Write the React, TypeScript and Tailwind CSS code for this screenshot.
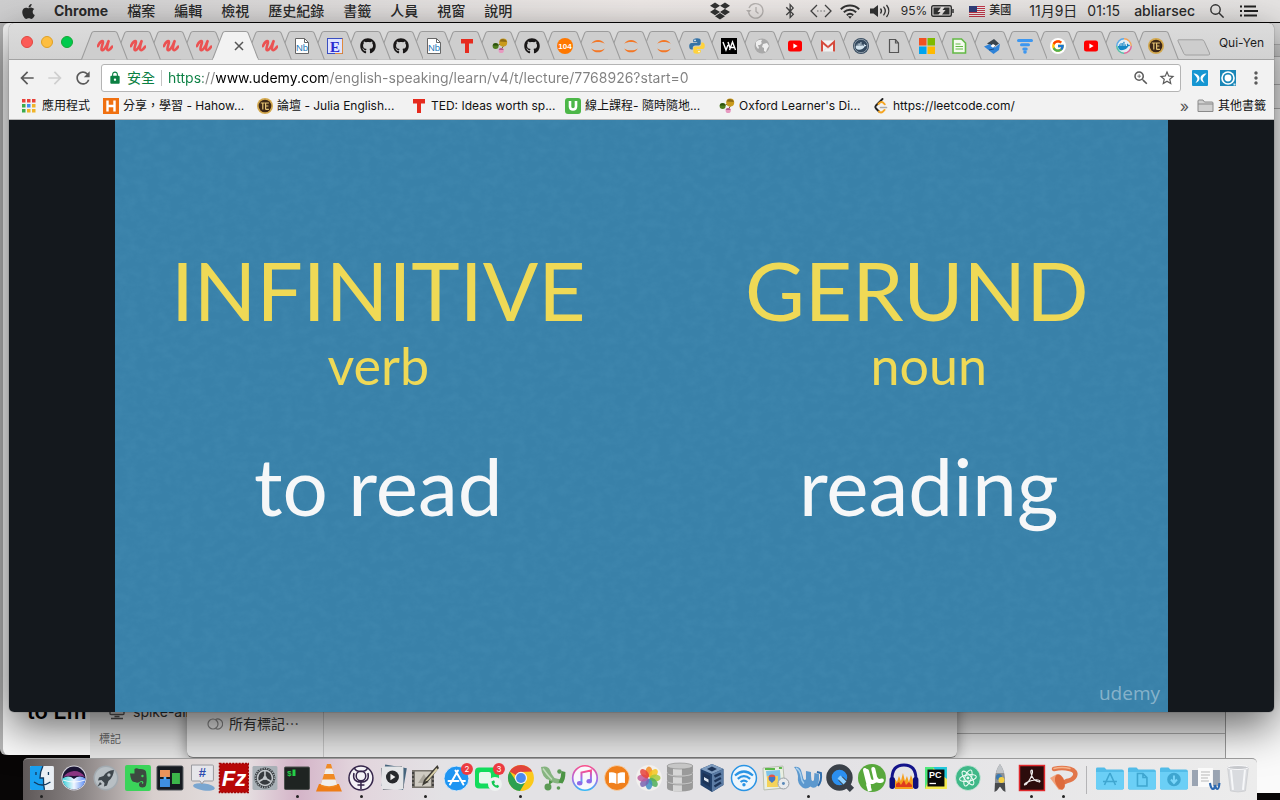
import React from "react";
import { FaGithub, FaApple, FaBluetoothB, FaDocker, FaDropbox } from "react-icons/fa";
import { FcGoogle } from "react-icons/fc";
import {
  MdArrowBack,
  MdArrowForward,
  MdLock,
  MdMoreVert,
  MdRefresh,
  MdStarBorder,
  MdZoomIn,
} from "react-icons/md";

/* ---------- favicons (16 x 16) ---------- */

type Kids = { children: React.ReactNode };

const Fav = ({ children }: Kids) => (
  <svg viewBox="0 0 16 16" className="size-4 shrink-0" aria-hidden="true">
    {children}
  </svg>
);

const UdemyFav = () => (
  <Fav>
    <path
      d="M.8 8.200C2.600 4.400 4.600 2.600 5.800 3.200 7 4.200 3.600 9.600 4.600 11.800 5.800 13.800 9.600 9 11.400 3.400M11.600 3.200C10.400 7 9.400 11 10.600 12 11.800 12.800 13.600 10.800 15.200 8.600"
      fill="none"
      stroke="#eb5252"
      strokeWidth="2.600"
      strokeLinecap="round"
    />
  </Fav>
);

const NbFav = () => (
  <Fav>
    <path d="M1.500.5h9l4 4v11h-13z" fill="#fff" stroke="#666" />
    <path d="M10.500.5v4h4" fill="none" stroke="#666" />
    <text x="2" y="12.500" fontSize="9.500" fontFamily="Liberation Sans Narrow, Liberation Sans" fill="#2a7ab8">
      Nb
    </text>
  </Fav>
);

const EFav = () => (
  <Fav>
    <rect x=".5" y=".5" width="15" height="15" fill="#dfe3ff" stroke="#3a4fc0" />
    <path d="M15.500.5v15H8" fill="none" stroke="#e08a3c" />
    <text x="3" y="13.500" fontSize="15" fontWeight="700" fontFamily="Liberation Serif" fill="#2b2bd0">
      E
    </text>
  </Fav>
);

const GithubFav = () => <FaGithub className="size-4 shrink-0 text-[#191717]" />;

const TedFav = () => (
  <Fav>
    <path d="M2 1h12v4.400h-4V15H6V5.400H2z" fill="#e62b1e" />
  </Fav>
);

const OxfordFav = () => (
  <Fav>
    <path d="M4 8 11 5M9 12l3-5" stroke="#7a6a2a" strokeWidth="1" />
    <circle cx="11.200" cy="4.600" r="4" fill="#c99a1c" />
    <path d="M7.500 3.500A4 4 0 0 1 15 4z" fill="#8c6a14" />
    <circle cx="3.600" cy="8" r="3" fill="#4f7d1e" />
    <path d="M.7 7.500a3 3 0 0 1 5.800 0z" fill="#2c5010" />
    <circle cx="9.200" cy="12.400" r="2.600" fill="#e79ac0" />
    <path d="M6.700 12a2.600 2.600 0 0 1 5 0z" fill="#b05a8a" />
  </Fav>
);

const JobFav = () => (
  <Fav>
    <circle cx="8" cy="8" r="8" fill="#ff7800" />
    <text x="8" y="11" textAnchor="middle" fontSize="8" fontWeight="700" fontFamily="Liberation Sans" fill="#fff">
      104
    </text>
  </Fav>
);

const JupyterFav = () => (
  <Fav>
    <path d="M1.200 6C4 .8 12 .8 14.800 6 11.800 3.400 4.200 3.400 1.200 6z" fill="#f37726" />
    <path d="M1.200 10.400c2.800 5.200 10.800 5.200 13.600 0-3 2.600-10.600 2.600-13.600 0z" fill="#f37726" />
  </Fav>
);

const PythonFav = () => (
  <Fav>
    <path
      d="M8 .3c-3 0-3.800 1-3.800 2.200v1.700h4v.7H2.500C1 4.900.2 6.200.2 8.200s.9 3.300 2.200 3.300h1.400V9.600c0-1.200 1-2.200 2.300-2.200h3.700c1.100 0 1.900-.9 1.900-1.900v-3C11.700 1 10.500.3 8 .3z"
      fill="#3572a5"
    />
    <path
      d="M8 15.700c3 0 3.800-1 3.800-2.200v-1.700h-4v-.7h5.700c1.500 0 2.300-1.300 2.300-3.300s-.9-3.300-2.200-3.300h-1.400v1.900c0 1.200-1 2.200-2.300 2.200H6.200c-1.100 0-1.900.9-1.900 1.900v3c0 1.500 1.200 2.200 3.700 2.200z"
      fill="#ffd23c"
    />
    <circle cx="6" cy="2.400" r=".8" fill="#fff" />
    <circle cx="10" cy="13.600" r=".8" fill="#fff" />
  </Fav>
);

const VaFav = () => (
  <Fav>
    <rect width="16" height="16" fill="#000" />
    <path d="M2 4l3 8 2-5M7 4l2 6M8.500 12l3-8 3 8M10 9.500h4" fill="none" stroke="#fff" strokeWidth="1.400" />
  </Fav>
);

const GlobeFav = () => (
  <Fav>
    <circle cx="8" cy="8" r="7.500" fill="#a9a9a9" />
    <path d="M2 4c2-2 4-2.500 6-2l-1 2 1 1-2 2H4l1 3-1 1-2-3zM9 6l4-1 2 3-2 3-1 3-2-1v-3L8 9z" fill="#eee" />
  </Fav>
);

const YoutubeFav = () => (
  <Fav>
    <rect x="1" y="2.500" width="14" height="11" rx="2.500" fill="#f00" />
    <path d="M6.400 5.500v5L10.600 8z" fill="#fff" />
  </Fav>
);

const GmailFav = () => (
  <Fav>
    <rect x="1" y="2.500" width="14" height="11" rx="1" fill="#f2f2f2" />
    <path d="M2 13.500V4l6 5.200L14 4v9.500" fill="none" stroke="#d54b3d" strokeWidth="2" />
    <path d="M3 13.400l4.500-4.500M13 13.400L8.500 8.900" stroke="#d8d8d8" strokeWidth=".6" />
  </Fav>
);

const DockerFav = () => (
  <Fav>
    <circle cx="8" cy="8" r="8" fill="#34495e" />
    <circle cx="8" cy="8" r="6.700" fill="none" stroke="#c4ccd4" strokeWidth=".6" />
    <svg x="2.500" y="2.500" width="11" height="11" viewBox="0 0 640 512">
      <FaDocker style={{ width: 640, height: 512, color: "#d4e4ee" }} />
    </svg>
  </Fav>
);

const DockerRingFav = () => (
  <Fav>
    <circle cx="8" cy="8" r="7" fill="#e4edf2" />
    <g fill="none" strokeWidth="1.500">
      <path d="M8 .8a7.200 7.200 0 0 1 7.200 7.200" stroke="#f2a45c" />
      <path d="M15.200 8A7.200 7.200 0 0 1 8 15.200" stroke="#e06a9a" />
      <path d="M8 15.200A7.200 7.200 0 0 1 .8 8" stroke="#58c0a8" />
      <path d="M.8 8A7.200 7.200 0 0 1 8 .8" stroke="#5aa8e8" />
    </g>
    <svg x="2" y="2.500" width="12" height="11" viewBox="0 0 640 512">
      <FaDocker style={{ width: 640, height: 512, color: "#1488c6" }} />
    </svg>
  </Fav>
);

const PageFav = () => (
  <Fav>
    <path d="M3.500 1.500h6l3 3.500v9.500h-9zM9.500 1.500V5h3" fill="none" stroke="#555" strokeWidth="1.200" />
  </Fav>
);

const MicrosoftFav = () => (
  <Fav>
    <path d="M0 0h7.500v7.500H0z" fill="#f25022" />
    <path d="M8.500 0H16v7.500H8.500z" fill="#7fba00" />
    <path d="M0 8.500h7.500V16H0z" fill="#00a4ef" />
    <path d="M8.500 8.500H16V16H8.500z" fill="#ffb900" />
  </Fav>
);

const SheetFav = () => (
  <Fav>
    <path d="M2 1h8.500L14.500 5v10H2z" fill="#f4fbef" stroke="#63b946" strokeWidth="1.600" />
    <path d="M4.500 6h5M4.500 8.500h7.500M4.500 11h7.500" stroke="#63b946" strokeWidth="1.200" />
  </Fav>
);

const PlaneFav = () => (
  <Fav>
    <path d="M3 5.500L10 1l5 4.500-5 3.500z" fill="#39444c" />
    <path d="M0 8.500l6-2.500 5 3.500 5-4-1 6.500-5.500 4z" fill="#2f83d8" />
    <path d="M6.500 8L9 6l2.500 1.500L9 9.800z" fill="#fff" />
    <path d="M5 12l5-1" stroke="#1c4f86" />
  </Fav>
);

const FunnelFav = () => (
  <Fav>
    <path
      d="M1.500 2.500h13M4.500 6.800h7M6.800 11h2.400"
      stroke="#3d97f0"
      strokeWidth="3"
      strokeLinecap="round"
    />
    <circle cx="8" cy="14" r="1.800" fill="#3d97f0" />
  </Fav>
);

const GoogleFav = () => (
  <span className="flex size-4 shrink-0 items-center justify-center rounded-full bg-white">
    <FcGoogle className="size-3.5" />
  </span>
);

const JuliaFav = () => (
  <Fav>
    <circle cx="8" cy="8" r="8" fill="#d3a84e" />
    <circle cx="8" cy="8" r="6.300" fill="#3d2817" />
    <path
      d="M3.800 5h4M5.800 5v6.500M8.600 4.500v7M8.600 5h3.300M8.600 8h2.800M8.600 11.300h3.300"
      stroke="#e4c274"
      strokeWidth="1.200"
      fill="none"
    />
  </Fav>
);

const tabs: { title: string; icon: React.ReactNode }[] = [
  { title: "Udemy", icon: <UdemyFav /> },
  { title: "Udemy", icon: <UdemyFav /> },
  { title: "Udemy", icon: <UdemyFav /> },
  { title: "Udemy", icon: <UdemyFav /> },
  { title: "Udemy lecture", icon: null },
  { title: "Udemy", icon: <UdemyFav /> },
  { title: "Notebook", icon: <NbFav /> },
  { title: "Encyclopedia", icon: <EFav /> },
  { title: "GitHub", icon: <GithubFav /> },
  { title: "GitHub", icon: <GithubFav /> },
  { title: "Notebook", icon: <NbFav /> },
  { title: "TED", icon: <TedFav /> },
  { title: "Oxford", icon: <OxfordFav /> },
  { title: "GitHub", icon: <GithubFav /> },
  { title: "Job bank", icon: <JobFav /> },
  { title: "Jupyter", icon: <JupyterFav /> },
  { title: "Jupyter", icon: <JupyterFav /> },
  { title: "Jupyter", icon: <JupyterFav /> },
  { title: "Python", icon: <PythonFav /> },
  { title: "Visual", icon: <VaFav /> },
  { title: "Globe", icon: <GlobeFav /> },
  { title: "YouTube", icon: <YoutubeFav /> },
  { title: "Gmail", icon: <GmailFav /> },
  { title: "Docker", icon: <DockerFav /> },
  { title: "Page", icon: <PageFav /> },
  { title: "Microsoft", icon: <MicrosoftFav /> },
  { title: "Document", icon: <SheetFav /> },
  { title: "Plane", icon: <PlaneFav /> },
  { title: "Filter", icon: <FunnelFav /> },
  { title: "Google", icon: <GoogleFav /> },
  { title: "YouTube", icon: <YoutubeFav /> },
  { title: "Docker", icon: <DockerRingFav /> },
  { title: "Julia English", icon: <JuliaFav /> },
];

const ACTIVE = 4;

/* ---------- macOS menu bar ---------- */

const menus = ["檔案", "編輯", "檢視", "歷史紀錄", "書籤", "人員", "視窗", "說明"];

function MenuBar() {
  return (
    <header className="flex h-[22px] items-center justify-between bg-linear-to-r from-[#cfcfd0] via-[#efeae8] to-[#e6e4e3] pr-[22px] pl-5 text-sm text-[#2b2b2b]">
      <nav className="flex items-center gap-[19px] whitespace-nowrap">
        <button aria-label="Apple" className="w-[15px]">
          <FaApple className="size-[17px] text-[#2d2d2d]" />
        </button>
        <button className="font-bold">Chrome</button>
        {menus.map((m) => (
          <button key={m} className="font-medium">
            {m}
          </button>
        ))}
      </nav>
      <div className="flex items-center whitespace-nowrap">
        <FaDropbox className="mr-4 size-5 text-[#333]" />
        <svg viewBox="0 0 18 18" className="mr-5 size-[18px]" fill="none" stroke="#b8b4b2" strokeWidth="1.300">
          <path d="M3 6a7.300 7.300 0 1 1-.4 4.500" />
          <path d="M10 5v4.500l2.500 2" />
          <path d="M0 8h5.500L2.800 11z" fill="#b8b4b2" stroke="none" />
        </svg>
        <FaBluetoothB className="mr-3.5 h-4 w-3 text-[#444]" />
        <svg viewBox="0 0 22 16" className="mr-2 h-4 w-[22px]" fill="none" stroke="#444" strokeWidth="1.300">
          <path d="M7 2L1 8l6 6M15 2l6 6-6 6" />
          <path d="M7 8h1.500M10.300 8h1.500M13.600 8h1.500" stroke="#999" strokeWidth="1.500" />
        </svg>
        <svg viewBox="0 0 20 15" className="mr-2.5 h-[15px] w-5" fill="none" stroke="#333" strokeWidth="1.900">
          <path d="M.8 5.200c5.200-5 13.200-5 18.400 0M3.800 8.200c3.600-3.300 8.800-3.300 12.400 0M6.800 11.200c2-1.700 4.400-1.700 6.400 0" />
          <path d="M8 12.300h4l-2 2.500z" fill="#333" stroke="none" />
        </svg>
        <svg viewBox="0 0 21 16" className="mr-2.5 h-4 w-[21px]" fill="none" stroke="#333" strokeWidth="1.300">
          <path d="M0 5.500h3.500L8 2v12l-4.500-3.500H0z" fill="#333" stroke="none" />
          <path d="M10.500 5.500c1.200 1.500 1.200 3.500 0 5M13.500 3.700c2.200 2.600 2.200 6 0 8.600M16.500 2c3 3.600 3 8.400 0 12" />
        </svg>
        <span className="mr-1 text-xs">95%</span>
        <svg viewBox="0 0 24 12" className="mr-3.5 h-3 w-6" fill="none">
          <rect x=".7" y=".7" width="19.600" height="10.600" rx="1.500" stroke="#333" strokeWidth="1.400" />
          <path d="M2.500 2.500h7.500L6.500 7h3L7.500 9.500h-5zM18.500 9.500H11L14.500 5h-3L13.500 2.500h5z" fill="#333" />
          <path d="M22 4v4" stroke="#333" strokeWidth="1.500" />
        </svg>
        <svg viewBox="0 0 16 11" className="mr-1 h-[11px] w-4">
          <rect width="16" height="11" fill="#f3eded" />
          <path d="M0 .5h16M0 2.500h16M0 4.500h16M0 6.500h16M0 8.500h16M0 10.500h16" stroke="#c2384a" />
          <rect width="8" height="6" fill="#313f7c" />
        </svg>
        <span className="mr-[18px] text-[11px] font-medium">美國</span>
        <span className="mr-2.5">11月9日</span>
        <span className="mr-3.5">01:15</span>
        <span className="mr-[15px] font-medium">abliarsec</span>
        <svg viewBox="0 0 14 14" className="mr-4 size-3.5" fill="none" stroke="#333" strokeWidth="1.400">
          <circle cx="5.500" cy="5.500" r="4.700" />
          <path d="M9 9l4.600 4.600" />
        </svg>
        <svg viewBox="0 0 18 12" className="h-3 w-[18px]" stroke="#222" strokeWidth="1.800">
          <path d="M0 1.500h2M4 1.500h12M0 6h2M4 6h14M0 10.500h2M4 10.500h13" />
        </svg>
      </div>
    </header>
  );
}

/* ---------- Chrome ---------- */

function TabStrip() {
  return (
    <div className="flex h-[37px] items-start rounded-t-md border-b border-[#a3a3a3] bg-linear-to-b from-[#dcdcdc] to-[#d2d2d2] pl-3">
      <div className="flex w-[60px] shrink-0 gap-2 pt-[13px]">
        <button aria-label="Close" className="size-3 rounded-full border border-[#e2463f] bg-[#fc5b57]" />
        <button aria-label="Minimize" className="size-3 rounded-full border border-[#dfa023] bg-[#fdbe41]" />
        <button aria-label="Zoom" className="size-3 rounded-full border border-[#14a834] bg-[#00ca4e]" />
      </div>
      <div role="tablist" className="mt-2 flex h-[29px] min-w-0 flex-1">
        {tabs.map((tab, i) => {
          const active = i === ACTIVE;
          return (
            <button
              key={i}
              role="tab"
              aria-selected={active}
              aria-label={tab.title}
              className="relative h-full min-w-0 flex-1"
              style={{ zIndex: active ? 60 : 50 - i }}
            >
              <svg
                viewBox="0 0 46 29"
                preserveAspectRatio="none"
                className="absolute top-0 left-0 h-full w-[calc(100%+14px)]"
                aria-hidden="true"
              >
                <path
                  d="M.5 28.500L10.500 2Q11.200.5 13 .5H33Q34.800.5 35.500 2L45.500 28.500"
                  fill={active ? "#f2f2f2" : "#cecece"}
                  stroke="#9c9c9c"
                />
                {active && <path d="M1 28.500h44" stroke="#f2f2f2" strokeWidth="2" />}
              </svg>
              <span className="absolute inset-y-0 left-0 flex w-[calc(100%+16px)] items-center justify-center">
                {active ? (
                  <svg viewBox="0 0 10 10" className="ml-1 size-2.5" stroke="#555" strokeWidth="1.500">
                    <path d="M1 1l8 8M9 1L1 9" />
                  </svg>
                ) : (
                  tab.icon
                )}
              </span>
            </button>
          );
        })}
      </div>
      <button aria-label="New tab" className="mt-4 ml-3 shrink-0">
        <svg viewBox="0 0 34 17" className="h-[17px] w-[34px]">
          <path
            d="M1.500.8H25q1.500 0 2.200 1.500L32.500 14q.8 2-1.200 2H9q-1.600 0-2.200-1.500L1 2Q.6.8 1.500.8z"
            fill="#cdcdcd"
            stroke="#a0a0a0"
          />
        </svg>
      </button>
      <button className="mt-[11px] mr-2.5 ml-2 shrink-0 text-xs leading-[18px] text-[#1c1c1c]">Qui-Yen</button>
    </div>
  );
}

function Toolbar() {
  return (
    <div className="flex h-8 items-center bg-[#f2f2f2] pt-1 pr-2 pl-2">
      <button aria-label="Back" className="mr-2">
        <MdArrowBack className="size-5 text-[#5a5a5a]" />
      </button>
      <button aria-label="Forward" className="mr-2">
        <MdArrowForward className="size-5 text-[#cfcfcf]" />
      </button>
      <button aria-label="Reload" className="mr-2">
        <MdRefresh className="size-5 text-[#5a5a5a]" />
      </button>
      <div className="flex h-7 min-w-0 flex-1 items-center rounded-[3px] border border-[#b4b4b4] bg-white pr-1 pl-1.5 text-sm">
        <MdLock className="size-3.5 shrink-0 text-[#0b8043]" />
        <span className="ml-[5px] shrink-0 text-[#0b8043]">安全</span>
        <span className="mx-1.5 h-4 w-px shrink-0 bg-[#c4c4c4]" />
        <input
          aria-label="Address"
          type="text"
          defaultValue="https://www.udemy.com/english-speaking/learn/v4/t/lecture/7768926?start=0"
          className="min-w-0 flex-1 bg-[linear-gradient(to_right,#0b8043_0px,#0b8043_35px,#808080_35px,#808080_48px,#000_48px,#000_159px,#808080_159px)] bg-clip-text text-transparent outline-none"
        />
        <button aria-label="Zoom level">
          <MdZoomIn className="size-[18px] text-[#5a5a5a]" />
        </button>
        <button aria-label="Bookmark this page" className="ml-2">
          <MdStarBorder className="size-[18px] text-[#5a5a5a]" />
        </button>
      </div>
      <button aria-label="Butterfly extension" className="ml-[11px]">
        <Fav>
          <rect width="16" height="16" rx="1" fill="#1696d2" />
          <path d="M1.500 3.500c3 0 6 1.500 6 5 0 2-2 4-4 4.500 1-1.500 1.500-2.500 2-4-1-2.500-2.500-4-4-5.500zM14.500 3.500c-3 0-6 1.500-6 5 0 2 2 4 4 4.500-1-1.500-1.500-2.500-2-4 1-2.500 2.500-4 4-5.500z" fill="#fff" />
        </Fav>
      </button>
      <button aria-label="Circle extension" className="ml-3">
        <Fav>
          <rect width="16" height="16" fill="#1a87b8" />
          <circle cx="8" cy="8" r="6.800" fill="#fff" />
          <circle cx="8" cy="8" r="4.300" fill="none" stroke="#1a87b8" strokeWidth="1.800" />
          <path d="M13.500 13.500h2v2h-2z" fill="#cfe6f2" />
        </Fav>
      </button>
      <button aria-label="Menu" className="ml-2.5">
        <MdMoreVert className="size-5 text-[#5a5a5a]" />
      </button>
    </div>
  );
}

const bookmarks: { label: string; icon: React.ReactNode }[] = [
  {
    label: "分享，學習 - Hahow...",
    icon: (
      <Fav>
        <rect width="16" height="16" fill="#f07010" />
        <path d="M4.500 2.500v11M11.500 2.500v11M4.500 8h7" stroke="#fff" strokeWidth="2.400" />
      </Fav>
    ),
  },
  { label: "論壇 - Julia English...", icon: <JuliaFav /> },
  { label: "TED: Ideas worth sp...", icon: <TedFav /> },
  {
    label: "線上課程- 隨時隨地...",
    icon: (
      <Fav>
        <rect width="16" height="16" rx="3" fill="#4cb748" />
        <path d="M5 3v5.500q0 3 3 3t3-3V3" fill="none" stroke="#fff" strokeWidth="2.600" />
      </Fav>
    ),
  },
  { label: "Oxford Learner's Di...", icon: <OxfordFav /> },
  {
    label: "https://leetcode.com/",
    icon: (
      <Fav>
        <path d="M9.500 1L3 7.500q-1.300 1.500 0 3l3 3" fill="none" stroke="#222" strokeWidth="1.900" strokeLinecap="round" />
        <path d="M6 13.500q2 1.800 4 0l1.600-1.600M5.500 6l1.500-1.500q1.500-1 3 0l1.800 1.800" fill="none" stroke="#f5a623" strokeWidth="1.900" strokeLinecap="round" />
        <path d="M7.500 9.500h6" stroke="#aaa" strokeWidth="1.700" strokeLinecap="round" />
      </Fav>
    ),
  },
];

const appDots = ["#e8413a", "#e8413a", "#e8413a", "#3bab4d", "#3f8df5", "#f0b429", "#3bab4d", "#f0b429", "#f0b429"];

function BookmarksBar() {
  return (
    <nav className="flex h-7 items-center border-b border-[#b9b9b9] bg-[#f2f2f2] pr-2 pl-[13px] text-xs whitespace-nowrap text-[#111]">
      <a href="#apps" className="flex w-[81px] shrink-0 items-center gap-1">
        <svg viewBox="0 0 16 16" className="size-4 shrink-0" aria-hidden="true">
          {appDots.map((c, i) => (
            <rect key={i} x={(i % 3) * 5} y={1 + Math.floor(i / 3) * 5} width="3.500" height="3.500" fill={c} />
          ))}
        </svg>
        應用程式
      </a>
      {bookmarks.map((b) => (
        <a key={b.label} href="#bookmark" className="flex w-[154px] items-center gap-1">
          {b.icon}
          {b.label}
        </a>
      ))}
      <button aria-label="More bookmarks" className="ml-auto text-base leading-4 text-[#555]">
        »
      </button>
      <button className="ml-2 flex items-center gap-1">
        <svg viewBox="0 0 17 14" className="h-3.5 w-[17px]">
          <path d="M1 12.500V2q0-1 1-1h4l1.500 2H15q1 0 1 1v8.500z" fill="#d0d0d0" stroke="#8a8a8a" />
          <path d="M1 5h15" stroke="#8a8a8a" />
        </svg>
        其他書籤
      </button>
    </nav>
  );
}

function Slide() {
  return (
    <main className="flex flex-1 rounded-b-[5px] bg-[#14181d] px-[106px]">
      <section className="relative flex-1 overflow-hidden bg-[#3981a9]">
        <svg className="absolute inset-0 size-full opacity-15" aria-hidden="true">
          <filter id="paper">
            <feTurbulence type="fractalNoise" baseFrequency="0.09 0.12" numOctaves="5" seed="4" />
            <feColorMatrix values="0 0 0 0 .1  0 0 0 0 .35  0 0 0 0 .55  2 0 0 0 -.7" />
          </filter>
          <rect width="100%" height="100%" filter="url(#paper)" />
        </svg>
        <div className="relative grid grid-cols-2 pt-[127px] text-center font-['Lato',sans-serif] whitespace-nowrap">
          <div>
            <h1 className="text-[82px] leading-[84px] text-[#efd956]">INFINITIVE</h1>
            <p className="mt-1 text-[52px] leading-[60px] text-[#efd956]">verb</p>
            <p className="mt-12 text-[80px] leading-[84px] text-[#f6f7f8]">to read</p>
          </div>
          <div className="pl-12">
            <h1 className="pr-6 text-[82px] leading-[84px] text-[#efd956]">GERUND</h1>
            <p className="mt-1 text-[52px] leading-[60px] text-[#efd956]">noun</p>
            <p className="mt-12 text-[80px] leading-[84px] text-[#f6f7f8]">reading</p>
          </div>
        </div>
        <span className="absolute right-2 bottom-1 font-['Open_Sans',sans-serif] text-[19px] leading-[30px] text-white/40">
          udemy
        </span>
      </section>
    </main>
  );
}

function ChromeWindow() {
  return (
    <div className="relative mt-px mr-[6px] mb-[88px] ml-[9px] flex flex-1 flex-col rounded-t-md rounded-b-[5px] shadow-[0_0_1px_rgba(0,0,0,0.8),0_14px_44px_rgba(0,0,0,0.62)]">
      <TabStrip />
      <Toolbar />
      <BookmarksBar />
      <Slide />
    </div>
  );
}

/* ---------- windows behind Chrome ---------- */

function BackgroundWindows() {
  return (
    <div aria-hidden="true" className="absolute inset-x-0 top-[23px] bottom-0 overflow-hidden text-[#333]">
      <div className="absolute top-0 bottom-[45px] left-0 w-40 rounded-bl-md bg-[#b5b5b5]" />
      <div className="absolute top-0 bottom-[45px] left-[3px] w-96 rounded-l-md bg-[#fafafa]">
        <span className="absolute bottom-[30px] left-6 text-[22px] leading-7 font-semibold text-black">to Em</span>
      </div>
      <div className="absolute top-0 right-0 bottom-[7px] w-80 bg-[#fafafa]">
        <div className="h-[22px] border-b border-[#b0b0b0] bg-[#dcdcdc]" />
        <div className="h-3 border-b border-[#b0b0b0] bg-[#cfcfcf]" />
        <div className="h-7 border-b border-[#b0b0b0] bg-[#ececec]" />
        <div className="h-6 border-b border-[#b0b0b0] bg-[#ececec]" />
      </div>
      <div className="absolute bottom-0 left-[90px] h-40 w-[900px] bg-[#e6e6e6]">
        <div className="absolute bottom-[78px] left-[19px] flex items-center gap-2 text-sm leading-5">
          <svg viewBox="0 0 16 16" className="size-4" fill="none" stroke="#555" strokeWidth="1.400">
            <rect x="1" y="1" width="14" height="9.500" rx="1" />
            <path d="M2 14.500h12M5.500 12.500h5" />
          </svg>
          spike-airp
        </div>
        <div className="absolute bottom-[53px] left-[9px] text-[11px] leading-4 text-[#666]">標記</div>
        <div className="absolute bottom-6 left-[21px] flex items-center gap-2.5 text-sm leading-5">
          <span className="size-3 rounded-full bg-[#f0363a]" />
          紅色
        </div>
      </div>
      <div className="absolute right-[54px] bottom-0 left-[700px] h-40 border-r border-[#9a9a9a] bg-[#eee]">
        <div className="absolute inset-x-0 bottom-[66px] border-t border-[#aaa]" />
      </div>
      <div className="absolute right-[323px] bottom-[42px] left-[187px] flex h-40 items-end rounded-b-md border-b border-[#777] bg-[#e8e8e8] shadow-[0_0_14px_rgba(0,0,0,0.45)]">
        <div className="flex h-full w-[137px] items-end gap-1.5 border-r border-[#c4c4c4] pb-[23px] pl-5 text-sm leading-5 whitespace-nowrap">
          <svg viewBox="0 0 16 14" className="h-5 w-4 shrink-0" fill="none" stroke="#888" strokeWidth="1.200">
            <circle cx="6" cy="7" r="5" />
            <path d="M8.500 2.500a5 5 0 1 1 0 9" />
          </svg>
          <span>所有標記⋯</span>
        </div>
      </div>
    </div>
  );
}

/* ---------- dock icons (32 x 32) ---------- */

const Badge = ({ n }: { n: number }) => (
  <g>
    <circle cx="26" cy="7" r="6" fill="#ec3b41" />
    <text x="26" y="10" textAnchor="middle" fontSize="8" fontFamily="Inter" fill="#fff">
      {n}
    </text>
  </g>
);

const Folder = ({ children }: Kids) => (
  <g>
    <path d="M2 7q0-1.500 1.500-1.500h7l2 2H28q2 0 2 2V26q0 1.500-1.500 1.500h-25Q2 27.500 2 26z" fill="#52bce8" />
    <path d="M2 10h28v16q0 1.500-1.500 1.500h-25Q2 27.500 2 26z" fill="#6bcff6" />
    <g fill="none" stroke="#3fa6d0" strokeWidth="1.600">
      {children}
    </g>
  </g>
);

const petals = ["#f58a1f", "#f6c61d", "#a6c93a", "#4fae5a", "#3f8fc4", "#7a64b0", "#c05a9a", "#e8443c"];

const dockApps: { name: string; running?: boolean; art: React.ReactNode }[] = [
  {
    name: "Finder",
    running: true,
    art: (
      <>
        <rect x="4" y="4" width="24" height="24" rx="1.500" fill="#e9eef4" />
        <path d="M5.500 4H17q-3 6-3 12h3.500q-.2 6 1 12h-13Q4 28 4 26.500v-21Q4 4 5.500 4z" fill="#18a0f0" />
        <path d="M10 10v3M22.500 10v3M8 20q8 6 16.500 0M17 4q-3 6-3 12h3.500q-.2 6 1 12" fill="none" stroke="#123a60" strokeWidth="1.300" />
      </>
    ),
  },
  {
    name: "Siri",
    art: (
      <>
        <defs>
          <linearGradient id="siri" x1="0" y1="0" x2="1" y2="0">
            <stop offset="0" stopColor="#38d0d8" />
            <stop offset=".5" stopColor="#f0f6ff" />
            <stop offset="1" stopColor="#5a8cf4" />
          </linearGradient>
        </defs>
        <circle cx="16" cy="16" r="12.500" fill="#d8d8e0" />
        <circle cx="16" cy="16" r="11.500" fill="#1a1433" />
        <path d="M5.500 15q3-5 10.500-6 7 0 11 6-6-2-11-1-5-1-10.500 1z" fill="#b0409c" opacity=".75" />
        <path d="M4.500 16.500q6-4 11.500.5 5.500-4.500 11.500-.5a11.500 11.500 0 0 1-5 9q-6.500 4-13 0a11.500 11.500 0 0 1-5-9z" fill="url(#siri)" />
        <path d="M5 18q11 4 22 0" fill="none" stroke="#fff" strokeWidth="1.200" opacity=".8" />
      </>
    ),
  },
  {
    name: "Launchpad",
    art: (
      <>
        <circle cx="16" cy="16" r="12.500" fill="#a2aab0" />
        <circle cx="16" cy="16" r="11" fill="#b8bfc4" />
        <path d="M24 8q-7 .5-10.500 6L9 15.500l-1 3 3.500-.5 3 3-.5 3.500 3-1 1.500-4.500q5-3.500 5.500-11z" fill="#3e464c" />
        <circle cx="19" cy="13" r="1.700" fill="#b8bfc4" />
        <path d="M10 20l-2.500 4.500L12 22z" fill="#3e464c" />
      </>
    ),
  },
  {
    name: "Evernote",
    art: (
      <>
        <rect x="3" y="3" width="26" height="26" rx="2" fill="#3bd45a" />
        <path d="M8 11.500h4.500V7q2-1.500 4.500 0 6-.5 7 2.500 1.500 8 0 14-.6 2-3.500 2-3.500 0-3.500-3t3-2.500v2q1.500 0 1.500-1.500t-2.500-1.500q-3 3-6 1-4 1-5-8.500z" fill="#3c4a40" />
        <circle cx="20.500" cy="14" r="1.200" fill="#3bd45a" />
      </>
    ),
  },
  {
    name: "Layout",
    art: (
      <>
        <rect x="3" y="4" width="26" height="24" rx="1.500" fill="#161a20" stroke="#4a4e54" />
        <path d="M6 8h10v7H6z" fill="#e8935a" />
        <path d="M6 17h10v8H6z" fill="#3f8fe0" />
        <path d="M18 11h8v11h-8z" fill="#3cb54a" />
        <circle cx="11" cy="16" r="1.500" fill="#5ab4ff" />
      </>
    ),
  },
  {
    name: "Chat",
    art: (
      <>
        <ellipse cx="18" cy="25" rx="11" ry="3.500" fill="#7aa6d0" transform="rotate(8 18 25)" />
        <path d="M5.500 3h21q1 0 1 1v14q0 1-1 1H18l-2 3-2-3H6.500q-1 0-1-1z" fill="#e6e6ea" stroke="#9a9a9e" />
        <text x="16.500" y="15" textAnchor="middle" fontSize="13" fontWeight="700" fontFamily="Liberation Sans" fill="#2c4ab0">
          #
        </text>
      </>
    ),
  },
  {
    name: "FileZilla",
    art: (
      <>
        <rect x="1.500" y="1.500" width="29" height="29" fill="#b80808" stroke="#a00505" strokeWidth="1.500" strokeDasharray="2 1.200" />
        <text x="16" y="24" textAnchor="middle" fontSize="22" fontStyle="italic" fontWeight="700" fontFamily="Liberation Sans" fill="#fff">
          Fz
        </text>
      </>
    ),
  },
  {
    name: "System Preferences",
    art: (
      <>
        <rect x="3.500" y="4" width="25" height="24" rx="1.500" fill="#a8b0b6" />
        <circle cx="16" cy="16" r="10.500" fill="#363a3e" />
        <circle cx="16" cy="16" r="7.500" fill="none" stroke="#c2c6ca" strokeWidth="1.600" />
        <circle cx="16" cy="16" r="9.500" fill="none" stroke="#a8b0b6" strokeWidth="1.500" strokeDasharray="1.200 1.200" />
        <path d="M16 16V9M16 16l6 3.500M16 16l-6 3.500" stroke="#c2c6ca" strokeWidth="1.600" />
        <circle cx="16" cy="16" r="2" fill="#c2c6ca" />
      </>
    ),
  },
  {
    name: "Terminal",
    running: true,
    art: (
      <>
        <rect x="3.500" y="5" width="25" height="22.500" rx="1" fill="#1f2422" stroke="#4a4e4c" />
        <text x="6" y="14" fontSize="8" fontWeight="700" fontFamily="Liberation Mono" fill="#25d048">
          $
        </text>
        <path d="M11.500 7.500h3v6.500h-3z" fill="#25d048" />
      </>
    ),
  },
  {
    name: "VLC",
    art: (
      <>
        <path d="M6 22h20l3 7.500H3z" fill="#ee7d16" />
        <path d="M14 2h4l6.500 22q-8.500 3.500-17 0z" fill="#f08a24" />
        <path d="M12.700 6.500h6.600l1.700 5.500H11zM9.400 17.500h13.200l1.600 5q-8 3.500-16.400 0z" fill="#f0efed" />
      </>
    ),
  },
  {
    name: "GitHub client",
    running: true,
    art: (
      <>
        <circle cx="16" cy="16" r="12" fill="#f4f2f6" stroke="#35254a" strokeWidth="1.500" />
        <g fill="none" stroke="#35254a" strokeWidth="1.500">
          <circle cx="16" cy="14" r="4.800" />
          <path d="M9.500 6q1 3.500 6.500 3.500T22.500 6M16 19v8M12.500 23h7M9 11q-2 9 7 9t7-9" />
        </g>
      </>
    ),
  },
  {
    name: "Media player",
    art: (
      <>
        <rect x="6" y="4" width="22" height="22" fill="#46647c" transform="rotate(10 16 16)" />
        <rect x="5" y="5" width="21" height="22" fill="#2c3440" transform="rotate(-5 16 16)" />
        <rect x="4.500" y="4.500" width="22" height="23" rx="2" fill="#e4e5e7" />
        <circle cx="15.500" cy="15" r="6.500" fill="#26292c" />
        <path d="M13.500 11.800v6.400l5-3.200z" fill="#eee" />
      </>
    ),
  },
  {
    name: "Script editor",
    running: true,
    art: (
      <>
        <path d="M3 8h22v18H3z" fill="#77736c" />
        <path d="M6 9.500h16v15H6z" fill="#cfcbc2" />
        <path d="M4 10v14M24 10v14" stroke="#333" strokeWidth="1.500" strokeDasharray="2 2" />
        <path d="M9 21l6-9 5 9z" fill="#a8a49a" />
        <path d="M28.500 3L15 18l-2 6 5.500-3.500L30 6z" fill="#3d3a34" />
        <path d="M27.500 6L16 19.500l3-1L29 7.500z" fill="#d8cfa8" />
      </>
    ),
  },
  {
    name: "App Store",
    art: (
      <>
        <circle cx="15.500" cy="16.500" r="12.500" fill="#1e95f2" stroke="#d6e6f4" />
        <path d="M17 8.500l-8 14M14.500 8.500l8 14M7.500 19h10M20.500 19h3.500" stroke="#fff" strokeWidth="2" strokeLinecap="round" />
        <Badge n={2} />
      </>
    ),
  },
  {
    name: "FaceTime",
    art: (
      <>
        <rect x="2" y="5.500" width="24" height="21" rx="4" fill="#12dc5c" />
        <rect x="6" y="10" width="12" height="11.500" rx="2" fill="#e8f8ee" />
        <circle cx="22" cy="22" r="7" fill="#eef2f0" />
        <path d="M18.500 19.500q.5 5.500 6.500 6.500l1.300-2-2-1.300-1.200.8q-1.600-.8-2-2.200l1-1-1-2z" fill="#12c852" />
        <Badge n={3} />
      </>
    ),
  },
  {
    name: "Chrome",
    running: true,
    art: (
      <>
        <circle cx="16" cy="16" r="13" fill="#fbc91b" />
        <path d="M16 16L4.700 9.500A13 13 0 0 1 27.300 9.500L16 10z" fill="#e1443a" />
        <path d="M4.700 9.500A13 13 0 0 0 15 29l6-10-5-3-5.500 2z" fill="#2da050" />
        <circle cx="16" cy="16" r="6.200" fill="#f2f2f2" />
        <circle cx="16" cy="16" r="4.900" fill="#4a8af0" />
      </>
    ),
  },
  {
    name: "Excel",
    art: (
      <>
        <path d="M4 5q7-2 9 3 1.500 5 4.500 8 5 2 10 .5-1 5-7 5-6-.5-8-3.500Q5 17 4 5z" fill="#86b480" />
        <path d="M6 6.500q4 6 9 11" fill="none" stroke="#c2dcbc" strokeWidth="1.500" />
        <path d="M24.500 9l4 1q0 8-3 11.500l-4-1q3-5 3-11.500z" fill="#4c9444" />
        <path d="M12 18l4 2-4 3z" fill="#4c9444" />
        <circle cx="11" cy="25" r="3.500" fill="#5c9a56" />
        <circle cx="22.500" cy="9.500" r="2.200" fill="#5c9a56" />
        <circle cx="21.500" cy="26" r="1.800" fill="#5c9a56" />
      </>
    ),
  },
  {
    name: "iTunes",
    art: (
      <>
        <defs>
          <linearGradient id="tune" x1="0" y1="0" x2="0" y2="1">
            <stop offset="0" stopColor="#fa4f8a" />
            <stop offset=".55" stopColor="#a86ae8" />
            <stop offset="1" stopColor="#35b8f6" />
          </linearGradient>
        </defs>
        <circle cx="16" cy="16" r="12.300" fill="#f8f8fb" stroke="url(#tune)" strokeWidth="1.700" />
        <path d="M12.500 21V10.500L22 8.500V19" fill="none" stroke="url(#tune)" strokeWidth="2" />
        <ellipse cx="10.700" cy="21.300" rx="2.700" ry="2.200" fill="#8f6ae8" />
        <ellipse cx="20.200" cy="19.300" rx="2.700" ry="2.200" fill="#8f6ae8" />
      </>
    ),
  },
  {
    name: "iBooks",
    art: (
      <>
        <circle cx="16" cy="16" r="12.500" fill="#f0801c" stroke="#f6d8b8" strokeWidth=".8" />
        <path d="M15.400 11.500Q11.500 9.500 8 10.500v10.500q4-1 7.400 1zM16.600 11.500q3.900-2 7.400-1v10.500q-4-1-7.400 1z" fill="#fff" />
      </>
    ),
  },
  {
    name: "Photos",
    art: (
      <>
        <circle cx="16" cy="16" r="13" fill="#f2f0ee" />
        {petals.map((c, i) => (
          <ellipse key={c} cx="16" cy="9.800" rx="3.400" ry="5.400" fill={c} opacity=".85" transform={`rotate(${i * 45} 16 16)`} />
        ))}
      </>
    ),
  },
  {
    name: "Database",
    art: (
      <>
        {[20, 12, 4].map((y) => (
          <g key={y}>
            <path d={`M3 ${y}v6q0 3.500 13 3.500t13-3.500v-6z`} fill="#9a9a9a" />
            <path d={`M9 ${y}v9q4 .6 9 .5v-9z`} fill="#d6d6d6" />
            <ellipse cx="16" cy={y} rx="13" ry="3" fill="#c6c6c6" stroke="#868686" strokeWidth=".6" />
          </g>
        ))}
      </>
    ),
  },
  {
    name: "VirtualBox",
    art: (
      <>
        <path d="M16 2l11.500 5v16L16 30 4.500 23V7z" fill="#21406a" />
        <path d="M16 2l11.500 5L16 12 4.500 7z" fill="#7f9dc0" />
        <path d="M16 12v18l11.500-7V7z" fill="#5c7ca4" />
        <path d="M6.500 10.500l7.500 3.500v11l-7.500-4.500z" fill="#1c3458" />
        <path d="M8 15l4.500 2.500v3L8 18z" fill="#dce6f0" />
        <path d="M18.500 14.500l6.500-3M18.500 19.500l6.500-3.500M18.500 24.500l6.500-4" stroke="#1c3458" strokeWidth="2.500" />
        <path d="M11 7l5-2.500L21 7l-5 2.500z" fill="#1c3458" />
      </>
    ),
  },
  {
    name: "Wi-Fi",
    art: (
      <>
        <circle cx="16" cy="16" r="12.500" fill="#eef6fc" stroke="#2a94e4" strokeWidth="1.500" />
        <path d="M7 13.500q9-8 18 0M9.800 16.800q6.200-5.400 12.400 0M12.600 20q3.400-2.800 6.800 0" fill="none" stroke="#2a94e4" strokeWidth="2.200" />
        <circle cx="16" cy="22.800" r="1.700" fill="#2a94e4" />
      </>
    ),
  },
  {
    name: "Route planner",
    art: (
      <>
        <path d="M3 6l20-2 2 22-21 2z" fill="#e9efe2" stroke="#b8beb0" />
        <path d="M6 9l14-1 1 14-13 1z" fill="#7fc4e8" />
        <path d="M7 14h11v11H7z" fill="#f4d35a" />
        <circle cx="12" cy="16" r="3.500" fill="#e0564c" />
        <path d="M9 15h6v3l-3 3-3-3z" fill="#3f78c4" />
        <path d="M5 7h10M19 6h3" stroke="#5cb84a" strokeWidth="2" />
        <circle cx="23.500" cy="21.500" r="5.500" fill="#e8eaec" stroke="#9aa0a6" />
        <circle cx="23.500" cy="21.500" r="1.500" fill="#5a88b8" />
      </>
    ),
  },
  {
    name: "Word",
    running: true,
    art: (
      <>
        <path d="M2 5q5-1 7 3 1.500 5 2.500 9 1.500 2 2.500 0V9l5 1q0 5 .5 8 1.500 2 2.500 0l.5-7 4.500 1q.5 8-1.500 11.500-3 4-7 1-4 3.500-8 1Q5 22 6 14q-1-6-4-9z" fill="#5c98ce" />
        <path d="M4 6q4 2 5 8 .5 5 3 7.500" fill="none" stroke="#a8d0ee" strokeWidth="1.500" />
        <path d="M25 10l4 1q1 8-3 13" fill="none" stroke="#2f6cab" strokeWidth="2" />
      </>
    ),
  },
  {
    name: "QuickTime",
    art: (
      <>
        <circle cx="15.500" cy="15.500" r="10.500" fill="#2b8ff0" stroke="#3a4048" strokeWidth="5.500" />
        <path d="M16.500 16.500L28 28" stroke="#3a4048" strokeWidth="6" />
        <path d="M15 15l6 6" stroke="#8fd0ff" strokeWidth="4" />
      </>
    ),
  },
  {
    name: "uTorrent",
    art: (
      <>
        <circle cx="16" cy="16" r="14" fill="#58a83c" />
        <path d="M9 8l4 16M11 9l2.300 8.500q1 3 4 2.300t2-4L17.300 7M20 16.500q1.500 3.500 6 2" fill="none" stroke="#fff" strokeWidth="4" strokeLinecap="round" />
        <path d="M12 22l2 7" stroke="#fff" strokeWidth="4" />
      </>
    ),
  },
  {
    name: "Audacity",
    art: (
      <>
        <path d="M4 17Q4 3 16 3t12 14" fill="none" stroke="#14148a" strokeWidth="3" />
        <path d="M7 27V17l2 3 2-6 2 5 2-8 2 8 2-5 2 6 2-7 2 5v9z" fill="#f6a01c" />
        <path d="M8 25v-3l3-2 2 3 3-5 2 5 3-3 3 3v2z" fill="#e03a1c" />
        <rect x="1.500" y="15" width="5.500" height="12" rx="2.700" fill="#10107a" />
        <rect x="25" y="15" width="5.500" height="12" rx="2.700" fill="#10107a" />
      </>
    ),
  },
  {
    name: "PyCharm",
    art: (
      <>
        <path d="M5 5h22v22H5z" fill="#f4ea4e" />
        <path d="M12 5h15v12z" fill="#20c8dc" />
        <path d="M5 5h9L5 27z" fill="#4ee87c" />
        <rect x="7.500" y="7.500" width="17" height="17" fill="#0a0a0a" />
        <text x="9" y="16.500" fontSize="9" fontWeight="700" fontFamily="Liberation Sans" fill="#fff">
          PC
        </text>
        <path d="M9.500 21.500h6.500" stroke="#fff" strokeWidth="1.300" />
      </>
    ),
  },
  {
    name: "Atom",
    art: (
      <>
        <circle cx="16" cy="16" r="12.500" fill="#3fb888" stroke="#d4e8e0" strokeWidth=".8" />
        <g fill="none" stroke="#eafaf2" strokeWidth="1.100">
          <ellipse cx="16" cy="16" rx="3.200" ry="8.500" transform="rotate(20 16 16)" />
          <ellipse cx="16" cy="16" rx="3.200" ry="8.500" transform="rotate(80 16 16)" />
          <ellipse cx="16" cy="16" rx="3.200" ry="8.500" transform="rotate(140 16 16)" />
        </g>
        <circle cx="16" cy="16" r="1.500" fill="#eafaf2" />
      </>
    ),
  },
  {
    name: "Rocket",
    art: (
      <>
        <path d="M16 2q4.500 6 5 14v9H11v-9q.5-8 5-14z" fill="#8c9094" />
        <path d="M16 2q3 4 4 9h-8q1-5 4-9z" fill="#c0c4c8" />
        <path d="M11 21l-.5 9 2.500-1.500 3-4 3 4 2.500 1.500L21 21z" fill="#484a4c" />
        <circle cx="15" cy="15" r="3" fill="#3a78b0" />
        <circle cx="17.500" cy="18" r="3" fill="#f4cf42" />
      </>
    ),
  },
  {
    name: "Acrobat",
    running: true,
    art: (
      <>
        <rect x="3.500" y="3.500" width="25" height="25" fill="#2c0c0c" stroke="#e0282c" strokeWidth="1.500" />
        <path d="M16 8q-1.500 0-1 3 1.500 8 8.500 9 1.500-1.500-1.500-2-6-.6-13 3.500-1.500 2 1 1 5.500-6 6.500-12 0-2.500-.5-2.500z" fill="none" stroke="#f2eeee" strokeWidth="1.200" />
      </>
    ),
  },
  {
    name: "PowerPoint",
    running: true,
    art: (
      <>
        <path d="M6 7q8-2 16 0 7 2 5 7-2 4-8 5l-2 1" fill="none" stroke="#e2764a" strokeWidth="4.500" strokeLinecap="round" />
        <path d="M6 6.500q8-2 16 0" fill="none" stroke="#f4b48c" strokeWidth="1.500" strokeLinecap="round" />
        <path d="M2 16l7-4 7 7-1 7-4 2z" fill="#f0a27c" />
        <ellipse cx="12" cy="20" rx="4.500" ry="8" fill="#dd6a3c" transform="rotate(-20 12 20)" />
      </>
    ),
  },
];

const dockPlaces: { name: string; art: React.ReactNode }[] = [
  {
    name: "Applications",
    art: (
      <Folder>
        <path d="M16 11l-5.500 12M16 11l5.500 12M9 19.500h14" />
      </Folder>
    ),
  },
  {
    name: "Documents",
    art: (
      <Folder>
        <path d="M11.500 11.500h5.500l4 4V24h-9.500zM17 11.500v4h4" />
      </Folder>
    ),
  },
  {
    name: "Downloads",
    art: (
      <Folder>
        <circle cx="16" cy="17.500" r="6" fill="#3fa6d0" />
        <path d="M16 13.500v6M13 17.500l3 3.500 3-3.500" stroke="#7ad6fa" strokeWidth="2" />
      </Folder>
    ),
  },
  {
    name: "Document",
    art: (
      <>
        <path d="M2 8h28v16H2z" fill="#9aa4b2" />
        <path d="M8 6h15v19H8z" fill="#fafafa" />
        <path d="M11 10h9M11 13h9M11 16h7M11 19h8" stroke="#b8b8b8" />
        <path d="M20 21q1 6 3 6t2-4q1 4 2.500 4t2-6" fill="none" stroke="#2c68b0" strokeWidth="2.200" />
      </>
    ),
  },
  {
    name: "Trash",
    art: (
      <>
        <path d="M5.500 5h21l-3 24q-7.500 2-15 0z" fill="#d9dbdf" stroke="#c4c6ca" strokeWidth=".6" />
        <path d="M9 8l2 20M23 8l-2 20" stroke="#f6f7f9" strokeWidth="2" />
        <ellipse cx="16" cy="5.500" rx="10.500" ry="2" fill="#c6c8cc" stroke="#f8f8fa" />
      </>
    ),
  },
];

const DockItem = ({ name, running, art }: { name: string; running?: boolean; art: React.ReactNode }) => (
  <button aria-label={name} className="flex min-w-0 flex-1 flex-col items-center">
    <svg viewBox="0 0 32 32" className="h-8 w-full" aria-hidden="true">
      {art}
    </svg>
    {running && <span className="mt-px size-[3px] rounded-full bg-[#222]" />}
  </button>
);

function Dock() {
  return (
    <nav
      aria-label="Dock"
      className="absolute inset-x-[23px] bottom-0 flex h-[42px] items-start rounded-t-[5px] border-t border-[#9a9a9a] bg-[linear-gradient(to_right,#5e5858_0px,#8c8686_60px,#d8cfcd_130px,#e6e1e2_220px,#d4b4c8_275px,#e2d4dc_330px,#e3e2e5_420px,#e3e2e5_800px,#ececec_100%)] px-[3px] pt-[3px]"
    >
      {dockApps.map((a) => (
        <DockItem key={a.name} {...a} />
      ))}
      <span className="mx-[7px] mt-1 h-7 w-px shrink-0 bg-[#b4b4b6]" />
      {dockPlaces.map((a) => (
        <DockItem key={a.name} {...a} />
      ))}
    </nav>
  );
}

export default function App() {
  return (
    <div className="relative flex min-h-screen flex-col overflow-hidden bg-[#080606] font-['Inter','Noto_Sans_CJK_TC',sans-serif]">
      <MenuBar />
      <BackgroundWindows />
      <ChromeWindow />
      <Dock />
    </div>
  );
}
